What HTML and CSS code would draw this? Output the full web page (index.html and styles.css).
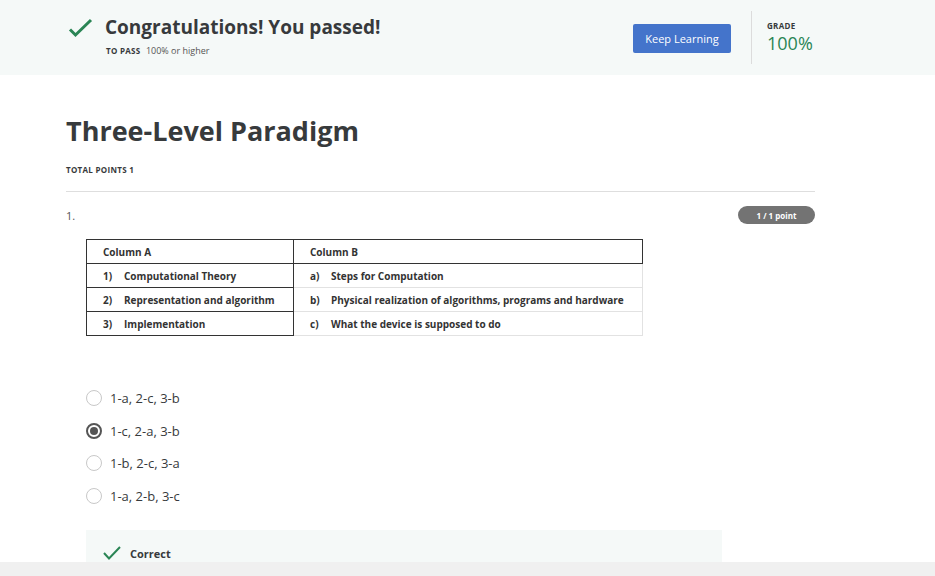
FILE: index.html
```html
<!DOCTYPE html>
<html>
<head>
<meta charset="utf-8">
<link rel="stylesheet" href="styles.css">
</head>
<body>
<header class="banner">
  <div class="banner-left">
    <svg class="banner-check" width="26" height="26" viewBox="0 0 26 26"><path d="M3 13.5 L8.5 19 L24 4" fill="none" stroke="#2a8555" stroke-width="3"/></svg>
    <div class="banner-text">
      <h1 class="banner-title">Congratulations! You passed!</h1>
      <div class="banner-sub"><span class="label">TO PASS</span> 100% or higher</div>
    </div>
  </div>
  <button class="btn">Keep Learning</button>
  <div class="divider"></div>
  <div class="grade">
    <div class="label">GRADE</div>
    <div class="grade-val">100%</div>
  </div>
</header>
<main class="main">
  <h2 class="quiz-title">Three-Level Paradigm</h2>
  <div class="total label">TOTAL POINTS 1</div>
  <hr class="rule">
  <div class="q-head">
    <span class="q-num">1.</span>
    <span class="pill">1 / 1 point</span>
  </div>
  <table class="match">
    <tr class="hdr"><td class="ca">Column A</td><td class="cb">Column B</td></tr>
    <tr><td class="ca"><span class="n">1)</span>Computational Theory</td><td class="cb"><span class="n">a)</span>Steps for Computation</td></tr>
    <tr><td class="ca"><span class="n">2)</span>Representation and algorithm</td><td class="cb"><span class="n">b)</span>Physical realization of algorithms, programs and hardware</td></tr>
    <tr><td class="ca"><span class="n">3)</span>Implementation</td><td class="cb"><span class="n">c)</span>What the device is supposed to do</td></tr>
  </table>
  <ul class="options">
    <li><span class="radio"></span>1-a, 2-c, 3-b</li>
    <li><span class="radio on"></span>1-c, 2-a, 3-b</li>
    <li><span class="radio"></span>1-b, 2-c, 3-a</li>
    <li><span class="radio"></span>1-a, 2-b, 3-c</li>
  </ul>
  <div class="feedback">
    <svg width="18" height="14" viewBox="0 0 18 14"><path d="M1 7 L6 12.5 L17 1" fill="none" stroke="#2a8555" stroke-width="2"/></svg>
    <span>Correct</span>
  </div>
</main>
<div class="footer-strip"></div>
</body>
</html>
```
FILE: styles.css
```css
* { box-sizing: border-box; }
html, body { margin: 0; padding: 0; }
body {
  font-family: "Open Sans", "Liberation Sans", sans-serif;
  color: #373a3c;
  background: #fff;
  width: 935px;
  height: 576px;
  overflow: hidden;
  display: flex;
  flex-direction: column;
}
.label {
  font-size: 8px;
  font-weight: 700;
  letter-spacing: 0.3px;
  color: #373a3c;
}
.banner {
  height: 75px;
  background: #f5f9f8;
  display: flex;
  align-items: center;
  padding-left: 66px;
  flex-shrink: 0;
}
.banner-left {
  display: flex;
  align-items: flex-start;
  width: 567px;
  margin-top: -3px;
}
.banner-check { margin-top: 1px; margin-left: 1px; }
.banner-text { margin-left: 12px; }
.banner-title {
  margin: 0;
  font-size: 19px;
  font-weight: 700;
  line-height: 24px;
  color: #373a3c;
}
.banner-sub {
  font-size: 9px;
  color: #555;
  margin-top: 5px;
  margin-left: 1px;
}
.banner-sub .label { font-size: 8px; margin-right: 3px; }
.btn {
  width: 98px;
  height: 29px;
  background: #4474cb;
  color: #fff;
  border: 0;
  border-radius: 2px;
  font-family: inherit;
  font-size: 11px;
  padding: 0;
  margin-top: 2px;
}
.divider {
  width: 1px;
  height: 53px;
  background: #dcdcdc;
  margin-left: 20px;
}
.grade { margin-left: 15px; margin-top: -2px; }
.grade .label { font-size: 8px; }
.grade-val {
  font-size: 18px;
  color: #2a8555;
  line-height: 22px;
  margin-top: 1px;
}
.main {
  height: 487px;
  overflow: hidden;
  flex-shrink: 0;
  padding: 0 120px 0 66px;
}
.quiz-title {
  margin: 40px 0 0;
  font-size: 27px;
  font-weight: 700;
  line-height: 32px;
}
.total { margin-top: 17px; }
.rule {
  border: 0;
  border-top: 1px solid #dedede;
  margin: 16px 0 0;
}
.q-head {
  display: flex;
  justify-content: space-between;
  align-items: center;
  margin-top: 14px;
}
.q-num { font-size: 11px; color: #555; }
.pill {
  background: #737373;
  color: #fff;
  font-size: 8px;
  font-weight: 700;
  border-radius: 9px;
  height: 18px;
  width: 77px;
  display: flex;
  align-items: center;
  justify-content: center;
}
.match {
  border-collapse: collapse;
  margin: 15px 0 0 20px;
  font-size: 10px;
  font-weight: 700;
  color: #333;
}
.match td {
  height: 24px;
  padding: 0 0 0 16px;
  white-space: nowrap;
}
.match .ca { width: 207px; border: 1px solid #333; }
.match .cb { width: 349px; border: 1px solid #e2e2e2; padding-left: 16px; }
.match .hdr td { border: 1px solid #333; }
.match .n { display: inline-block; width: 21px; }
.options {
  list-style: none;
  margin: 46px 0 0 20px;
  padding: 0;
}
.options li {
  display: flex;
  align-items: center;
  height: 32.5px;
  font-size: 13px;
  color: #373a3c;
}
.radio {
  width: 16px;
  height: 16px;
  border: 1.5px solid #c8c8c8;
  border-radius: 50%;
  margin-right: 8px;
  display: flex;
  align-items: center;
  justify-content: center;
}
.radio.on { border: 2px solid #555; }
.radio.on::after {
  content: "";
  width: 8px;
  height: 8px;
  border-radius: 50%;
  background: #555;
}
.feedback {
  margin: 18px 0 0 20px;
  width: 636px;
  height: 40px;
  background: #f5f9f8;
  display: flex;
  align-items: center;
  padding: 6px 0 0 17px;
  font-size: 11px;
  font-weight: 700;
  color: #373a3c;
}
.feedback span { margin-left: 9px; }
.footer-strip {
  height: 14px;
  background: #f0f0f0;
  flex-shrink: 0;
}
```
